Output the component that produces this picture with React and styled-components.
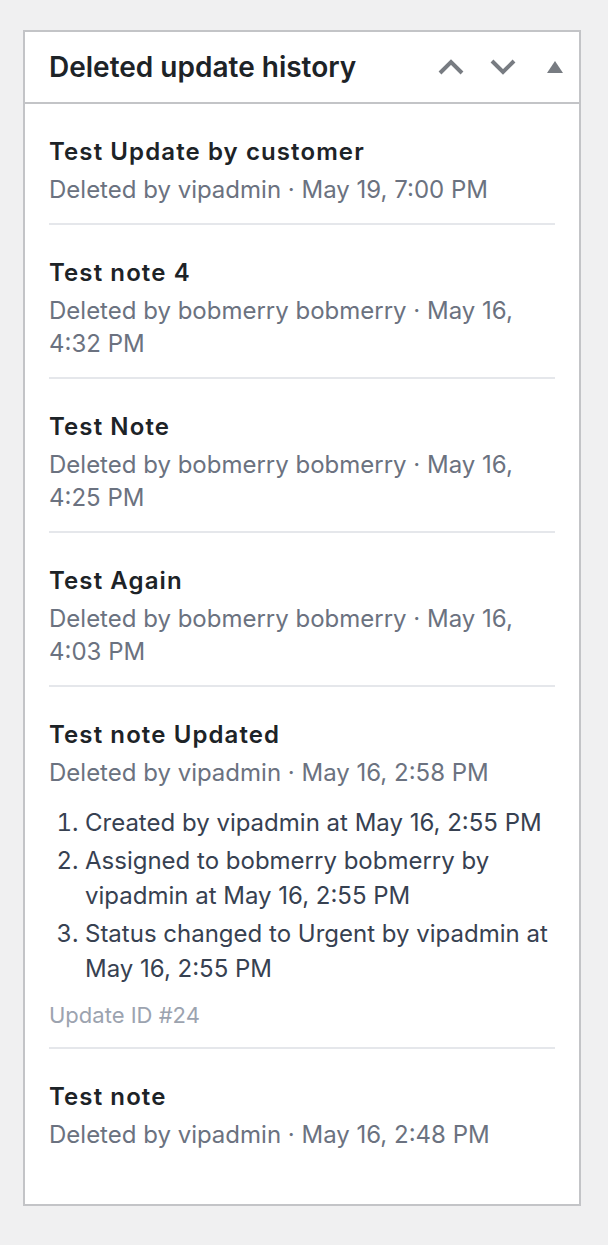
import styled, { createGlobalStyle } from "styled-components";

const GlobalStyle = createGlobalStyle`
  html, body {
    margin: 0;
    padding: 0;
    background: #f0f0f1;
  }
  body {
    font-family: Inter, "Noto Sans", "Liberation Sans", sans-serif;
    -webkit-font-smoothing: antialiased;
  }
`;

const items = [
  { title: "Test Update by customer", meta: "Deleted by vipadmin · May 19, 7:00 PM" },
  { title: "Test note 4", meta: "Deleted by bobmerry bobmerry · May 16, 4:32 PM" },
  { title: "Test Note", meta: "Deleted by bobmerry bobmerry · May 16, 4:25 PM" },
  { title: "Test Again", meta: "Deleted by bobmerry bobmerry · May 16, 4:03 PM" },
  {
    title: "Test note Updated",
    meta: "Deleted by vipadmin · May 16, 2:58 PM",
    history: [
      "Created by vipadmin at May 16, 2:55 PM",
      "Assigned to bobmerry bobmerry by vipadmin at May 16, 2:55 PM",
      "Status changed to Urgent by vipadmin at May 16, 2:55 PM",
    ],
    updateId: 24,
  },
  { title: "Test note", meta: "Deleted by vipadmin · May 16, 2:48 PM" },
];

export default function App() {
  return (
    <>
      <GlobalStyle />
      <Page>
        <Postbox>
          <Header>
            <Heading>Deleted update history</Heading>
            <Controls>
              <IconButton aria-label="Move up">
                <svg width="28" height="18" viewBox="0 0 28 18">
                  <path d="M3 15 L14 4 L25 15" fill="none" stroke="#787c82" strokeWidth="4" />
                </svg>
              </IconButton>
              <IconButton aria-label="Move down">
                <svg width="28" height="18" viewBox="0 0 28 18">
                  <path d="M3 3 L14 14 L25 3" fill="none" stroke="#787c82" strokeWidth="4" />
                </svg>
              </IconButton>
              <ToggleButton aria-label="Toggle panel">
                <svg width="18" height="14" viewBox="0 0 18 14">
                  <path d="M1 13 L9 1 L17 13 Z" fill="#787c82" />
                </svg>
              </ToggleButton>
            </Controls>
          </Header>
          <Body>
            {items.map((item, i) => (
              <Item key={i} $last={i === items.length - 1}>
                <ItemTitle>{item.title}</ItemTitle>
                <Meta>{item.meta}</Meta>
                {item.history && (
                  <History>
                    {item.history.map((h, j) => (
                      <HistoryEntry key={j}>{h}</HistoryEntry>
                    ))}
                  </History>
                )}
                {item.updateId && <UpdateId>Update ID #{item.updateId}</UpdateId>}
              </Item>
            ))}
          </Body>
        </Postbox>
      </Page>
    </>
  );
}

const Page = styled.div`
  padding: 30px 27px 40px 23px;
`;

const Postbox = styled.div`
  background: #fff;
  border: 2px solid #c3c4c7;
  box-sizing: border-box;
  width: 558px;
`;

const Header = styled.div`
  display: flex;
  align-items: center;
  justify-content: space-between;
  height: 70px;
  padding: 0 12px 0 24px;
  border-bottom: 2px solid #c3c4c7;
`;

const Heading = styled.h2`
  margin: 0;
  font-size: 28px;
  font-weight: 600;
  color: #1d2327;
`;

const Controls = styled.div`
  display: flex;
  align-items: center;
  gap: 18px;
`;

const IconButton = styled.button`
  display: flex;
  align-items: center;
  justify-content: center;
  border: none;
  background: none;
  padding: 0 3px;
  cursor: pointer;
`;

const ToggleButton = styled(IconButton)`
  margin-left: 5px;
`;

const Body = styled.div`
  padding: 0 24px 36px;
`;

const Item = styled.div`
  padding: 32px 0 17px;
  border-bottom: ${(p) => (p.$last ? "none" : "2px solid #e5e7eb")};
`;

const ItemTitle = styled.div`
  font-size: 24px;
  line-height: 31px;
  font-weight: 600;
  letter-spacing: 1.1px;
  color: #1d2327;
`;

const Meta = styled.div`
  margin-top: 6px;
  font-size: 24px;
  line-height: 33px;
  color: #6b7280;
`;

const History = styled.ol`
  margin: 16px 0 0;
  padding-left: 36px;
  color: #374151;
`;

const HistoryEntry = styled.li`
  font-size: 24px;
  line-height: 35px;
  & + & {
    margin-top: 3px;
  }
`;

const UpdateId = styled.div`
  margin-top: 14px;
  font-size: 22px;
  line-height: 30px;
  color: #9ca3af;
`;
